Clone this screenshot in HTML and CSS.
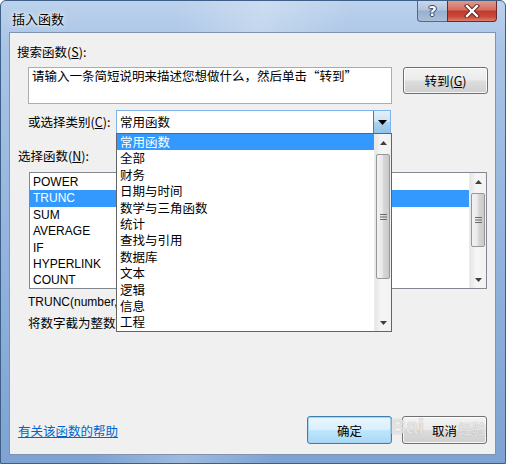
FILE: index.html
```html
<!DOCTYPE html>
<html lang="zh-CN">
<head>
<meta charset="utf-8">
<title>插入函数</title>
<link rel="stylesheet" href="styles.css">
</head>
<body>
<div class="window">
  <div class="titlebar">
    <span class="title">插入函数</span>
    <div class="caption-btns">
      <div class="cbtn help"><span class="q">?</span></div>
      <div class="cbtn close">
        <svg width="16" height="14" viewBox="0 0 16 14"><path d="M3 2 L13 12 M13 2 L3 12" stroke="#5a2020" stroke-width="4.2" stroke-linecap="square"/><path d="M3 2 L13 12 M13 2 L3 12" stroke="#ffffff" stroke-width="2.4" stroke-linecap="square"/></svg>
      </div>
    </div>
  </div>
  <div class="client">
    <div class="label l-search">搜索函数(<u>S</u>):</div>
    <div class="search-row">
      <div class="searchbox">请输入一条简短说明来描述您想做什么，然后单击“转到”</div>
      <div class="btn go">转到(<u>G</u>)</div>
    </div>
    <div class="cat-row">
      <span class="cat-label">或选择类别(<u>C</u>):</span>
      <div class="combo">
        <span class="combo-value">常用函数</span>
        <span class="combo-arrow"><svg width="9" height="5" viewBox="0 0 9 5"><polygon points="0,0 9,0 4.5,5" fill="#000"/></svg></span>
        <div class="dropdown">
          <ul class="dd-items">
            <li class="sel">常用函数</li>
            <li>全部</li>
            <li>财务</li>
            <li>日期与时间</li>
            <li>数学与三角函数</li>
            <li>统计</li>
            <li>查找与引用</li>
            <li>数据库</li>
            <li>文本</li>
            <li>逻辑</li>
            <li>信息</li>
            <li>工程</li>
          </ul>
          <div class="vscroll dd-scroll">
            <span class="arr"><svg width="7" height="4" viewBox="0 0 7 4"><polygon points="0,4 7,4 3.5,0" fill="#404040"/></svg></span>
            <div class="track">
              <div class="thumb dd-thumb"><svg width="7" height="6" viewBox="0 0 7 6"><path d="M0 0.5 H7 M0 3 H7 M0 5.5 H7" stroke="#6a6a6a" stroke-width="1"/></svg></div>
            </div>
            <span class="arr"><svg width="7" height="4" viewBox="0 0 7 4"><polygon points="0,0 7,0 3.5,4" fill="#404040"/></svg></span>
          </div>
        </div>
      </div>
    </div>
    <div class="label l-func">选择函数(<u>N</u>):</div>
    <div class="funclist">
      <ul class="fn-items">
        <li>POWER</li>
        <li class="sel">TRUNC</li>
        <li>SUM</li>
        <li>AVERAGE</li>
        <li>IF</li>
        <li>HYPERLINK</li>
        <li>COUNT</li>
      </ul>
      <div class="vscroll fn-scroll">
        <span class="arr"><svg width="7" height="4" viewBox="0 0 7 4"><polygon points="0,4 7,4 3.5,0" fill="#404040"/></svg></span>
        <div class="track">
          <div class="thumb fn-thumb"><svg width="7" height="6" viewBox="0 0 7 6"><path d="M0 0.5 H7 M0 3 H7 M0 5.5 H7" stroke="#6a6a6a" stroke-width="1"/></svg></div>
        </div>
        <span class="arr"><svg width="7" height="4" viewBox="0 0 7 4"><polygon points="0,0 7,0 3.5,4" fill="#404040"/></svg></span>
      </div>
    </div>
    <div class="syntax">TRUNC(number,num_digits)</div>
    <div class="desc">将数字截为整数或保留指定位数的小数</div>
    <div class="bottom-row">
      <a class="helplink">有关该函数的帮助</a>
      <div class="btn ok">确定</div>
      <div class="btn cancel">取消</div>
    </div>
    <div class="watermark">Bai<span class="wm-cn">经验</span></div>
  </div>
</div>
</body>
</html>
```
FILE: styles.css
```css
* { box-sizing: border-box; }
body {
  margin: 0;
  width: 506px;
  height: 464px;
  overflow: hidden;
  background: #ffffff;
  font-family: "Liberation Sans", "Noto Sans CJK SC", sans-serif;
  font-size: 12px;
  color: #000;
}
ul { margin: 0; padding: 0; list-style: none; }

.window {
  width: 506px;
  height: 464px;
  display: flex;
  flex-direction: column;
  padding: 0 9px 8px 8px;
  border: 1px solid #3d5f88;
  border-radius: 6px 6px 0 0;
  background:
    linear-gradient(100deg, rgba(255,255,255,0) 30%, rgba(255,255,255,0.25) 45%, rgba(255,255,255,0) 60%),
    linear-gradient(180deg, #bcd2ec 0%, #a9c4e6 10%, #8fb1dc 60%, #7ea3d2 100%);
}

.titlebar {
  height: 31px;
  flex: none;
  display: flex;
  align-items: flex-start;
  justify-content: space-between;
}
.title {
  margin: 10px 0 0 3px;
  font-family: "Noto Sans CJK SC", sans-serif;
  font-size: 13px;
  line-height: 16px;
  color: #000;
  text-shadow: 0 0 6px rgba(255,255,255,0.9), 0 0 3px rgba(255,255,255,0.9);
}
.caption-btns {
  display: flex;
  margin-right: -1px;
}
.cbtn {
  height: 21px;
  display: flex;
  align-items: center;
  justify-content: center;
  border: 1px solid #4f6a8c;
  border-top: none;
}
.help {
  width: 30px;
  border-radius: 0 0 0 4px;
  border-right: none;
  background: linear-gradient(180deg, #c9d7e8 0%, #b1c4dc 45%, #98b0cd 50%, #a9bfd9 100%);
}
.help .q {
  font-family: "DejaVu Sans", sans-serif;
  font-weight: bold;
  font-size: 14px;
  color: #fff;
  line-height: 14px;
  text-shadow: 0 0 1px #2d4868, 1px 0 0 #2d4868, -1px 0 0 #2d4868, 0 1px 0 #2d4868, 0 -1px 0 #2d4868;
}
.close {
  width: 50px;
  border-radius: 0 0 4px 0;
  border-color: #6b2a25;
  background: linear-gradient(180deg, #e09a8c 0%, #d36e60 45%, #c2392c 50%, #cc4b38 80%, #dd8270 100%);
}

.client {
  flex: 1;
  position: relative;
  display: flex;
  flex-direction: column;
  background: #f0f0f0;
  border: 1px solid #8094b0;
}

.label {
  font-family: "Noto Sans CJK SC", sans-serif;
  font-size: 12.5px;
  line-height: 16px;
  height: 16px;
  white-space: nowrap;
}
.l-search { margin: 11px 0 0 7px; }
.l-func { margin: 14px 0 0 8px; }

.search-row {
  display: flex;
  align-items: flex-start;
  margin: 7px 0 0 18px;
}
.searchbox {
  width: 364px;
  height: 37px;
  background: #fff;
  border: 1px solid #abadb3;
  border-top-color: #a5acb5;
  padding: 0 3px;
  font-family: "Noto Sans CJK SC", sans-serif;
  font-size: 12.5px;
  line-height: 16px;
  color: #000;
}
.btn {
  display: flex;
  align-items: center;
  justify-content: center;
  height: 27px;
  border: 1px solid #707070;
  border-radius: 3px;
  font-family: "Noto Sans CJK SC", sans-serif;
  font-size: 12.5px;
  color: #000;
  background: linear-gradient(180deg, #f3f3f3 0%, #ebebeb 48%, #dddddd 52%, #cfcfcf 100%);
  box-shadow: inset 0 0 0 1px rgba(255,255,255,0.8);
}
.go {
  width: 85px;
  margin-left: 11px;
}

.cat-row {
  display: flex;
  align-items: center;
  margin: 6px 0 0 18px;
}
.cat-label {
  width: 88px;
  font-family: "Noto Sans CJK SC", sans-serif;
  font-size: 12.5px;
  line-height: 16px;
  white-space: nowrap;
}
.combo {
  position: relative;
  width: 275px;
  height: 24px;
  display: flex;
  align-items: stretch;
  background: #fff;
  border: 1px solid #7eb4ea;
}
.combo-value {
  flex: 1;
  padding: 0 3px;
  display: flex;
  align-items: center;
  font-family: "Noto Sans CJK SC", sans-serif;
  font-size: 12.5px;
  line-height: 16px;
}
.combo-arrow {
  width: 17px;
  display: flex;
  align-items: center;
  justify-content: center;
  border-left: 1px solid #3c7fb1;
  background: linear-gradient(180deg, #e3f1fb 0%, #c9e3f6 50%, #a9d2f0 52%, #94c3e6 100%);
}

.dropdown {
  position: absolute;
  left: -1px;
  top: 22px;
  width: 276px;
  height: 199px;
  display: flex;
  background: #fff;
  border: 1px solid #646464;
  z-index: 5;
}
.dd-items {
  flex: 1;
}
.dd-items li, .fn-items li {
  height: 16.4px;
  line-height: 16.4px;
  padding-left: 3px;
  white-space: nowrap;
  font-family: "Noto Sans CJK SC", sans-serif;
  font-size: 12.5px;
}
.fn-items li {
  font-family: "Liberation Sans", sans-serif;
  font-size: 12px;
}
li.sel {
  background: #3399ff;
  color: #fff;
}

.vscroll {
  width: 17px;
  flex: none;
  display: flex;
  flex-direction: column;
  background: linear-gradient(90deg, #e6e6e6, #f6f6f6 40%, #f2f2f2);
  border-left: 1px solid #ececec;
}
.vscroll .arr {
  height: 17px;
  display: flex;
  align-items: center;
  justify-content: center;
  flex: none;
}
.vscroll .track {
  flex: 1;
  display: flex;
  flex-direction: column;
}
.thumb {
  margin: 0 1px;
  display: flex;
  align-items: center;
  justify-content: center;
  border: 1px solid #979797;
  border-radius: 2px;
  background: linear-gradient(90deg, #f3f3f3 0%, #e8e8e8 45%, #d6d6d6 55%, #cacaca 100%);
}
.dd-thumb { height: 125px; margin-top: 3px; }
.fn-thumb { height: 54px; margin-top: 3px; }

.funclist {
  display: flex;
  margin: 8px 0 0 19px;
  width: 458px;
  height: 117px;
  background: #fff;
  border: 1px solid #828790;
}
.fn-items {
  flex: 1;
  padding-top: 1px;
}

.syntax {
  margin: 5px 0 0 18px;
  line-height: 16px;
  font-family: "Liberation Sans", sans-serif;
  white-space: nowrap;
}
.desc {
  margin: 5px 0 0 18px;
  line-height: 16px;
  font-family: "Noto Sans CJK SC", sans-serif;
  font-size: 12.5px;
  white-space: nowrap;
}

.bottom-row {
  margin-top: auto;
  display: flex;
  align-items: center;
  padding: 0 8px 10px 8px;
}
.helplink {
  flex: 1;
  color: #0066cc;
  text-decoration: underline;
  font-family: "Noto Sans CJK SC", sans-serif;
  font-size: 12.5px;
  line-height: 16px;
  margin-top: 2px;
}
.ok, .cancel {
  width: 85px;
  height: 28px;
}
.ok {
  border-color: #3c7fb1;
  background: linear-gradient(180deg, #eaf6fd 0%, #d9f0fc 48%, #bee6fd 52%, #a7d9f5 100%);
  box-shadow: inset 0 0 0 1px #a5d4f0;
}
.cancel {
  margin-left: 10px;
}

.watermark {
  position: absolute;
  left: 380px;
  top: 381px;
  font-family: "Liberation Sans", sans-serif;
  font-size: 22px;
  font-weight: bold;
  color: rgba(255,255,255,0.7);
  text-shadow: 0 0 1px rgba(110,110,110,0.6);
  pointer-events: none;
  white-space: nowrap;
}
.wm-cn {
  font-family: "Noto Sans CJK SC", sans-serif;
  font-size: 14px;
  margin-left: 34px;
}
```
